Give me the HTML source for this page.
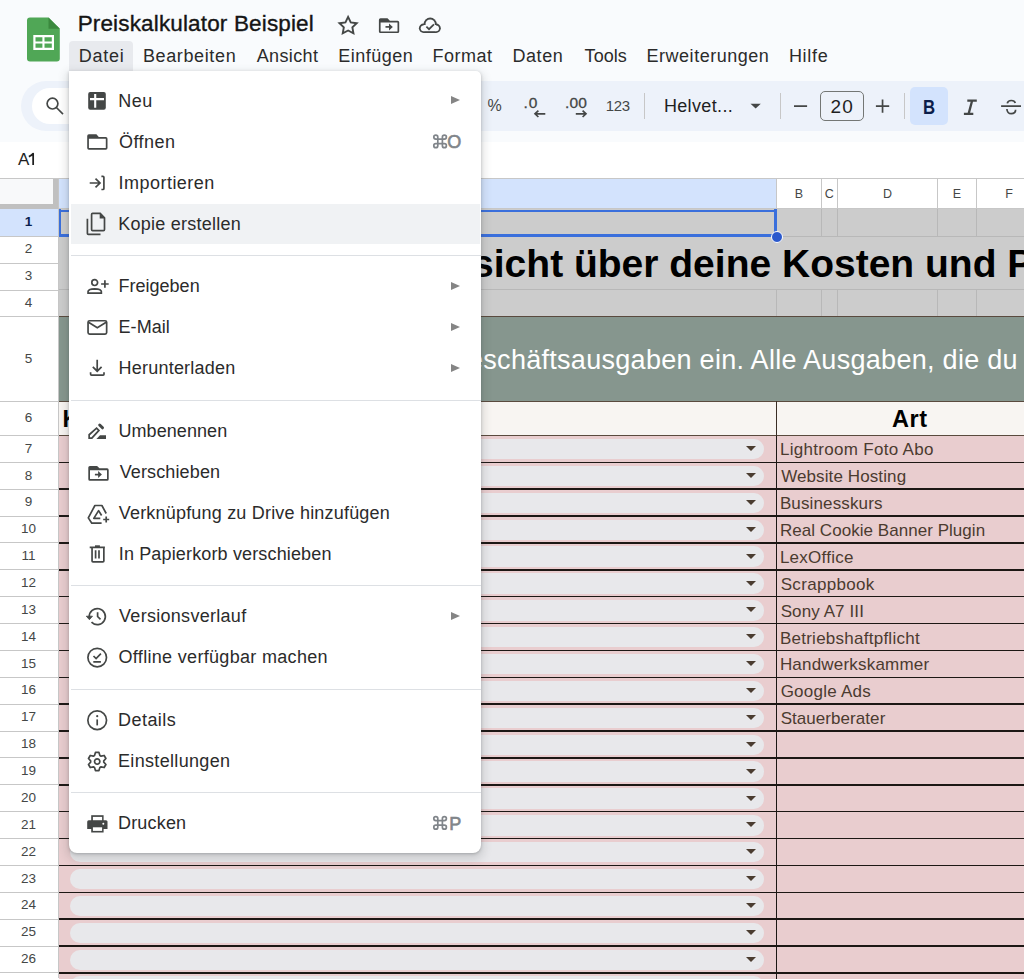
<!DOCTYPE html>
<html><head><meta charset="utf-8"><style>
html,body{margin:0;padding:0;}
body{width:1024px;height:979px;overflow:hidden;position:relative;background:#f9fbfd;font-family:"Liberation Sans",sans-serif;}
.t{position:absolute;line-height:0;white-space:nowrap;}
.r{position:absolute;}
.tr{position:absolute;right:100%;white-space:pre;}
svg{position:absolute;left:0;top:0;}
</style></head><body>
<div class="t " style="left:77.65px;top:23.80px;font-size:22.5px;color:#151515;font-weight:400;letter-spacing:0.154px;-webkit-text-stroke:0.35px #151515">Preiskalkulator Beispiel</div>
<div class="r" style="left:69.20px;top:41.00px;width:63.60px;height:32.00px;background:#e8eaee;border-radius:4px 4px 0 0"></div>
<div class="t " style="left:78.70px;top:55.66px;font-size:18px;color:#2b2b2b;font-weight:400;letter-spacing:0.787px;">Datei</div>
<div class="t " style="left:142.90px;top:55.66px;font-size:18px;color:#2b2b2b;font-weight:400;letter-spacing:0.633px;">Bearbeiten</div>
<div class="t " style="left:256.70px;top:55.66px;font-size:18px;color:#2b2b2b;font-weight:400;letter-spacing:0.375px;">Ansicht</div>
<div class="t " style="left:338.30px;top:55.66px;font-size:18px;color:#2b2b2b;font-weight:400;letter-spacing:0.486px;">Einfügen</div>
<div class="t " style="left:432.50px;top:55.66px;font-size:18px;color:#2b2b2b;font-weight:400;letter-spacing:0.510px;">Format</div>
<div class="t " style="left:512.40px;top:55.66px;font-size:18px;color:#2b2b2b;font-weight:400;letter-spacing:0.588px;">Daten</div>
<div class="t " style="left:584.60px;top:55.66px;font-size:18px;color:#2b2b2b;font-weight:400;letter-spacing:0.062px;">Tools</div>
<div class="t " style="left:646.50px;top:55.66px;font-size:18px;color:#2b2b2b;font-weight:400;letter-spacing:0.525px;">Erweiterungen</div>
<div class="t " style="left:788.90px;top:55.66px;font-size:18px;color:#2b2b2b;font-weight:400;letter-spacing:0.688px;">Hilfe</div>
<div class="r" style="left:20.70px;top:80.70px;width:1100.00px;height:50.70px;background:#edf2fa;border-radius:25.35px"></div>
<div class="r" style="left:31.80px;top:87.90px;width:300.00px;height:36.00px;background:#ffffff;border-radius:18px"></div>
<div class="r" style="left:0.00px;top:141.80px;width:1024.00px;height:36.70px;background:#ffffff;"></div>
<div class="t " style="left:18.10px;top:159.91px;font-size:17px;color:#1f1f1f;font-weight:400;">A</div>
<div class="t " style="left:487.40px;top:106.21px;font-size:16px;color:#444746;font-weight:400;">%</div>
<div class="t " style="left:663.90px;top:105.86px;font-size:18px;color:#1f1f1f;font-weight:400;letter-spacing:0.356px;">Helvet...</div>
<div class="r" style="left:820.40px;top:91.30px;width:43.60px;height:29.60px;background:transparent;border:1.3px solid #747775;border-radius:5px;box-sizing:border-box"></div>
<div class="t " style="left:830.50px;top:106.92px;font-size:19px;color:#1f1f1f;font-weight:400;letter-spacing:1.300px;">20</div>
<div class="r" style="left:910.30px;top:87.00px;width:37.90px;height:37.90px;background:#d3e3fd;border-radius:5px"></div>
<div class="r" style="left:643.50px;top:93.20px;width:1.00px;height:25.50px;background:#c7c7c7;"></div>
<div class="r" style="left:779.70px;top:93.20px;width:1.00px;height:25.50px;background:#c7c7c7;"></div>
<div class="r" style="left:904.10px;top:93.20px;width:1.00px;height:25.50px;background:#c7c7c7;"></div>
<div class="r" style="left:0.00px;top:178.40px;width:1024.00px;height:800.60px;background:#ffffff;"></div>
<div class="r" style="left:58.50px;top:178.90px;width:718.00px;height:30.00px;background:#d3e3fd;"></div>
<div class="r" style="left:0.00px;top:178.20px;width:1024.00px;height:1.00px;background:#c7c7c7;"></div>
<div class="r" style="left:0.00px;top:208.40px;width:1024.00px;height:1.00px;background:#c7c7c7;"></div>
<div class="r" style="left:776.00px;top:178.40px;width:1.00px;height:30.50px;background:#c7c7c7;"></div>
<div class="r" style="left:820.60px;top:178.40px;width:1.00px;height:30.50px;background:#c7c7c7;"></div>
<div class="r" style="left:836.90px;top:178.40px;width:1.00px;height:30.50px;background:#c7c7c7;"></div>
<div class="r" style="left:936.90px;top:178.40px;width:1.00px;height:30.50px;background:#c7c7c7;"></div>
<div class="r" style="left:975.60px;top:178.40px;width:1.00px;height:30.50px;background:#c7c7c7;"></div>
<div class="t" style="left:779px;width:40px;text-align:center;top:194.27px;font-size:12.5px;color:#444746">B</div>
<div class="t" style="left:809.3px;width:40px;text-align:center;top:194.27px;font-size:12.5px;color:#444746">C</div>
<div class="t" style="left:867.4px;width:40px;text-align:center;top:194.27px;font-size:12.5px;color:#444746">D</div>
<div class="t" style="left:936.8px;width:40px;text-align:center;top:194.27px;font-size:12.5px;color:#444746">E</div>
<div class="t" style="left:989px;width:40px;text-align:center;top:194.27px;font-size:12.5px;color:#444746">F</div>
<div class="r" style="left:0.00px;top:178.90px;width:58.50px;height:30.00px;background:#f8f9fa;"></div>
<div class="r" style="left:52.50px;top:178.90px;width:6.00px;height:30.50px;background:#c0c0c0;"></div>
<div class="r" style="left:0.00px;top:203.50px;width:58.50px;height:5.90px;background:#c0c0c0;"></div>
<div class="r" style="left:0.00px;top:209.20px;width:58.40px;height:27.00px;background:#d3e3fd;"></div>
<div class="r" style="left:0.00px;top:235.70px;width:58.40px;height:1.00px;background:#c7c7c7;"></div>
<div class="t" style="left:0;width:57px;text-align:center;top:222.42px;font-size:13.5px;color:#0b1f4f;font-weight:700">1</div>
<div class="r" style="left:0.00px;top:262.70px;width:58.40px;height:1.00px;background:#c7c7c7;"></div>
<div class="t" style="left:0;width:57px;text-align:center;top:249.42px;font-size:13.5px;color:#444746;font-weight:400">2</div>
<div class="r" style="left:0.00px;top:289.70px;width:58.40px;height:1.00px;background:#c7c7c7;"></div>
<div class="t" style="left:0;width:57px;text-align:center;top:276.42px;font-size:13.5px;color:#444746;font-weight:400">3</div>
<div class="r" style="left:0.00px;top:316.00px;width:58.40px;height:1.00px;background:#c7c7c7;"></div>
<div class="t" style="left:0;width:57px;text-align:center;top:303.07px;font-size:13.5px;color:#444746;font-weight:400">4</div>
<div class="r" style="left:0.00px;top:400.60px;width:58.40px;height:1.00px;background:#c7c7c7;"></div>
<div class="t" style="left:0;width:57px;text-align:center;top:358.52px;font-size:13.5px;color:#444746;font-weight:400">5</div>
<div class="r" style="left:0.00px;top:435.00px;width:58.40px;height:1.00px;background:#c7c7c7;"></div>
<div class="t" style="left:0;width:57px;text-align:center;top:418.02px;font-size:13.5px;color:#444746;font-weight:400">6</div>
<div class="r" style="left:0.00px;top:461.87px;width:58.40px;height:1.00px;background:#c7c7c7;"></div>
<div class="t" style="left:0;width:57px;text-align:center;top:448.66px;font-size:13.5px;color:#444746;font-weight:400">7</div>
<div class="r" style="left:0.00px;top:488.74px;width:58.40px;height:1.00px;background:#c7c7c7;"></div>
<div class="t" style="left:0;width:57px;text-align:center;top:475.53px;font-size:13.5px;color:#444746;font-weight:400">8</div>
<div class="r" style="left:0.00px;top:515.61px;width:58.40px;height:1.00px;background:#c7c7c7;"></div>
<div class="t" style="left:0;width:57px;text-align:center;top:502.40px;font-size:13.5px;color:#444746;font-weight:400">9</div>
<div class="r" style="left:0.00px;top:542.48px;width:58.40px;height:1.00px;background:#c7c7c7;"></div>
<div class="t" style="left:0;width:57px;text-align:center;top:529.27px;font-size:13.5px;color:#444746;font-weight:400">10</div>
<div class="r" style="left:0.00px;top:569.35px;width:58.40px;height:1.00px;background:#c7c7c7;"></div>
<div class="t" style="left:0;width:57px;text-align:center;top:556.14px;font-size:13.5px;color:#444746;font-weight:400">11</div>
<div class="r" style="left:0.00px;top:596.22px;width:58.40px;height:1.00px;background:#c7c7c7;"></div>
<div class="t" style="left:0;width:57px;text-align:center;top:583.01px;font-size:13.5px;color:#444746;font-weight:400">12</div>
<div class="r" style="left:0.00px;top:623.09px;width:58.40px;height:1.00px;background:#c7c7c7;"></div>
<div class="t" style="left:0;width:57px;text-align:center;top:609.88px;font-size:13.5px;color:#444746;font-weight:400">13</div>
<div class="r" style="left:0.00px;top:649.96px;width:58.40px;height:1.00px;background:#c7c7c7;"></div>
<div class="t" style="left:0;width:57px;text-align:center;top:636.75px;font-size:13.5px;color:#444746;font-weight:400">14</div>
<div class="r" style="left:0.00px;top:676.83px;width:58.40px;height:1.00px;background:#c7c7c7;"></div>
<div class="t" style="left:0;width:57px;text-align:center;top:663.62px;font-size:13.5px;color:#444746;font-weight:400">15</div>
<div class="r" style="left:0.00px;top:703.70px;width:58.40px;height:1.00px;background:#c7c7c7;"></div>
<div class="t" style="left:0;width:57px;text-align:center;top:690.49px;font-size:13.5px;color:#444746;font-weight:400">16</div>
<div class="r" style="left:0.00px;top:730.57px;width:58.40px;height:1.00px;background:#c7c7c7;"></div>
<div class="t" style="left:0;width:57px;text-align:center;top:717.36px;font-size:13.5px;color:#444746;font-weight:400">17</div>
<div class="r" style="left:0.00px;top:757.44px;width:58.40px;height:1.00px;background:#c7c7c7;"></div>
<div class="t" style="left:0;width:57px;text-align:center;top:744.23px;font-size:13.5px;color:#444746;font-weight:400">18</div>
<div class="r" style="left:0.00px;top:784.31px;width:58.40px;height:1.00px;background:#c7c7c7;"></div>
<div class="t" style="left:0;width:57px;text-align:center;top:771.10px;font-size:13.5px;color:#444746;font-weight:400">19</div>
<div class="r" style="left:0.00px;top:811.18px;width:58.40px;height:1.00px;background:#c7c7c7;"></div>
<div class="t" style="left:0;width:57px;text-align:center;top:797.97px;font-size:13.5px;color:#444746;font-weight:400">20</div>
<div class="r" style="left:0.00px;top:838.05px;width:58.40px;height:1.00px;background:#c7c7c7;"></div>
<div class="t" style="left:0;width:57px;text-align:center;top:824.84px;font-size:13.5px;color:#444746;font-weight:400">21</div>
<div class="r" style="left:0.00px;top:864.92px;width:58.40px;height:1.00px;background:#c7c7c7;"></div>
<div class="t" style="left:0;width:57px;text-align:center;top:851.71px;font-size:13.5px;color:#444746;font-weight:400">22</div>
<div class="r" style="left:0.00px;top:891.79px;width:58.40px;height:1.00px;background:#c7c7c7;"></div>
<div class="t" style="left:0;width:57px;text-align:center;top:878.58px;font-size:13.5px;color:#444746;font-weight:400">23</div>
<div class="r" style="left:0.00px;top:918.66px;width:58.40px;height:1.00px;background:#c7c7c7;"></div>
<div class="t" style="left:0;width:57px;text-align:center;top:905.45px;font-size:13.5px;color:#444746;font-weight:400">24</div>
<div class="r" style="left:0.00px;top:945.53px;width:58.40px;height:1.00px;background:#c7c7c7;"></div>
<div class="t" style="left:0;width:57px;text-align:center;top:932.32px;font-size:13.5px;color:#444746;font-weight:400">25</div>
<div class="r" style="left:0.00px;top:972.40px;width:58.40px;height:1.00px;background:#c7c7c7;"></div>
<div class="t" style="left:0;width:57px;text-align:center;top:959.19px;font-size:13.5px;color:#444746;font-weight:400">26</div>
<div class="r" style="left:0.00px;top:999.27px;width:58.40px;height:1.00px;background:#c7c7c7;"></div>
<div class="t" style="left:0;width:57px;text-align:center;top:986.06px;font-size:13.5px;color:#444746;font-weight:400">27</div>
<div class="r" style="left:0.00px;top:1026.14px;width:58.40px;height:1.00px;background:#c7c7c7;"></div>
<div class="r" style="left:58.20px;top:178.40px;width:1.00px;height:800.00px;background:#c7c7c7;"></div>
<div class="r" style="left:59.00px;top:209.20px;width:965.00px;height:107.30px;background:#cccccc;"></div>
<div class="r" style="left:776.00px;top:209.20px;width:1.00px;height:27.00px;background:#b8b8b8;"></div>
<div class="r" style="left:776.00px;top:290.20px;width:1.00px;height:26.30px;background:#b8b8b8;"></div>
<div class="r" style="left:820.60px;top:209.20px;width:1.00px;height:27.00px;background:#b8b8b8;"></div>
<div class="r" style="left:820.60px;top:290.20px;width:1.00px;height:26.30px;background:#b8b8b8;"></div>
<div class="r" style="left:836.90px;top:209.20px;width:1.00px;height:27.00px;background:#b8b8b8;"></div>
<div class="r" style="left:836.90px;top:290.20px;width:1.00px;height:26.30px;background:#b8b8b8;"></div>
<div class="r" style="left:936.90px;top:209.20px;width:1.00px;height:27.00px;background:#b8b8b8;"></div>
<div class="r" style="left:936.90px;top:290.20px;width:1.00px;height:26.30px;background:#b8b8b8;"></div>
<div class="r" style="left:975.60px;top:209.20px;width:1.00px;height:27.00px;background:#b8b8b8;"></div>
<div class="r" style="left:975.60px;top:290.20px;width:1.00px;height:26.30px;background:#b8b8b8;"></div>
<div class="r" style="left:59.00px;top:235.70px;width:965.00px;height:1.00px;background:#b8b8b8;"></div>
<div class="r" style="left:59.00px;top:289.40px;width:965.00px;height:1.00px;background:#b8b8b8;"></div>
<div class="t " style="left:782.00px;top:264.19px;font-size:39px;color:#000;font-weight:700;"><span class="tr">Übersicht über deine </span>Kosten und Preise</div>
<div class="r" style="left:59.00px;top:316.00px;width:965.00px;height:85.10px;background:#86968e;"></div>
<div class="r" style="left:59.00px;top:315.60px;width:965.00px;height:1.20px;background:#5a4a3e;"></div>
<div class="t " style="left:699.60px;top:359.94px;font-size:27px;color:#ffffff;font-weight:400;letter-spacing:0.29px"><span class="tr">Geschäftsausgaben </span>ein. Alle Ausgaben, die du</div>
<div class="r" style="left:59.00px;top:401.10px;width:965.00px;height:34.50px;background:#f8f5f2;"></div>
<div class="r" style="left:59.00px;top:400.60px;width:965.00px;height:1.20px;background:#5a4a3e;"></div>
<div class="r" style="left:59.00px;top:435.00px;width:965.00px;height:1.20px;background:#5a4a3e;"></div>
<div class="r" style="left:775.80px;top:401.10px;width:1.40px;height:34.50px;background:#3a2e26;"></div>
<div class="t " style="left:62.50px;top:418.56px;font-size:23.5px;color:#000;font-weight:700;">Kosten</div>
<div class="t " style="left:892.05px;top:418.86px;font-size:23.5px;color:#000;font-weight:700;letter-spacing:0.600px;">Art</div>
<div class="r" style="left:59.00px;top:436.20px;width:965.00px;height:543.00px;background:#e9cdcf;"></div>
<div class="r" style="left:59.00px;top:461.62px;width:965.00px;height:1.50px;background:#1c1714;"></div>
<div class="r" style="left:70.20px;top:439.00px;width:693.80px;height:20.40px;background:#e8e8eb;border-radius:10.2px"></div>
<div class="r" style="left:745.6px;top:446.20px;width:0;height:0;border-left:5px solid transparent;border-right:5px solid transparent;border-top:5.3px solid #4a3c30"></div>
<div class="t " style="left:779.90px;top:450.41px;font-size:17px;color:#4b3b30;font-weight:400;letter-spacing:0.303px;">Lightroom Foto Abo</div>
<div class="r" style="left:59.00px;top:488.49px;width:965.00px;height:1.50px;background:#1c1714;"></div>
<div class="r" style="left:70.20px;top:465.87px;width:693.80px;height:20.40px;background:#e8e8eb;border-radius:10.2px"></div>
<div class="r" style="left:745.6px;top:473.07px;width:0;height:0;border-left:5px solid transparent;border-right:5px solid transparent;border-top:5.3px solid #4a3c30"></div>
<div class="t " style="left:781.15px;top:477.28px;font-size:17px;color:#4b3b30;font-weight:400;letter-spacing:0.107px;">Website Hosting</div>
<div class="r" style="left:59.00px;top:515.36px;width:965.00px;height:1.50px;background:#1c1714;"></div>
<div class="r" style="left:70.20px;top:492.74px;width:693.80px;height:20.40px;background:#e8e8eb;border-radius:10.2px"></div>
<div class="r" style="left:745.6px;top:499.94px;width:0;height:0;border-left:5px solid transparent;border-right:5px solid transparent;border-top:5.3px solid #4a3c30"></div>
<div class="t " style="left:779.90px;top:504.15px;font-size:17px;color:#4b3b30;font-weight:400;letter-spacing:0.136px;">Businesskurs</div>
<div class="r" style="left:59.00px;top:542.23px;width:965.00px;height:1.50px;background:#1c1714;"></div>
<div class="r" style="left:70.20px;top:519.61px;width:693.80px;height:20.40px;background:#e8e8eb;border-radius:10.2px"></div>
<div class="r" style="left:745.6px;top:526.81px;width:0;height:0;border-left:5px solid transparent;border-right:5px solid transparent;border-top:5.3px solid #4a3c30"></div>
<div class="t " style="left:779.90px;top:531.02px;font-size:17px;color:#4b3b30;font-weight:400;letter-spacing:0.046px;">Real Cookie Banner Plugin</div>
<div class="r" style="left:59.00px;top:569.10px;width:965.00px;height:1.50px;background:#1c1714;"></div>
<div class="r" style="left:70.20px;top:546.48px;width:693.80px;height:20.40px;background:#e8e8eb;border-radius:10.2px"></div>
<div class="r" style="left:745.6px;top:553.68px;width:0;height:0;border-left:5px solid transparent;border-right:5px solid transparent;border-top:5.3px solid #4a3c30"></div>
<div class="t " style="left:779.90px;top:557.89px;font-size:17px;color:#4b3b30;font-weight:400;letter-spacing:0.256px;">LexOffice</div>
<div class="r" style="left:59.00px;top:595.97px;width:965.00px;height:1.50px;background:#1c1714;"></div>
<div class="r" style="left:70.20px;top:573.35px;width:693.80px;height:20.40px;background:#e8e8eb;border-radius:10.2px"></div>
<div class="r" style="left:745.6px;top:580.55px;width:0;height:0;border-left:5px solid transparent;border-right:5px solid transparent;border-top:5.3px solid #4a3c30"></div>
<div class="t " style="left:780.65px;top:584.76px;font-size:17px;color:#4b3b30;font-weight:400;letter-spacing:0.333px;">Scrappbook</div>
<div class="r" style="left:59.00px;top:622.84px;width:965.00px;height:1.50px;background:#1c1714;"></div>
<div class="r" style="left:70.20px;top:600.22px;width:693.80px;height:20.40px;background:#e8e8eb;border-radius:10.2px"></div>
<div class="r" style="left:745.6px;top:607.42px;width:0;height:0;border-left:5px solid transparent;border-right:5px solid transparent;border-top:5.3px solid #4a3c30"></div>
<div class="t " style="left:780.65px;top:611.63px;font-size:17px;color:#4b3b30;font-weight:400;letter-spacing:0.100px;">Sony A7 III</div>
<div class="r" style="left:59.00px;top:649.71px;width:965.00px;height:1.50px;background:#1c1714;"></div>
<div class="r" style="left:70.20px;top:627.09px;width:693.80px;height:20.40px;background:#e8e8eb;border-radius:10.2px"></div>
<div class="r" style="left:745.6px;top:634.29px;width:0;height:0;border-left:5px solid transparent;border-right:5px solid transparent;border-top:5.3px solid #4a3c30"></div>
<div class="t " style="left:779.90px;top:638.50px;font-size:17px;color:#4b3b30;font-weight:400;letter-spacing:0.256px;">Betriebshaftpflicht</div>
<div class="r" style="left:59.00px;top:676.58px;width:965.00px;height:1.50px;background:#1c1714;"></div>
<div class="r" style="left:70.20px;top:653.96px;width:693.80px;height:20.40px;background:#e8e8eb;border-radius:10.2px"></div>
<div class="r" style="left:745.6px;top:661.16px;width:0;height:0;border-left:5px solid transparent;border-right:5px solid transparent;border-top:5.3px solid #4a3c30"></div>
<div class="t " style="left:779.90px;top:665.37px;font-size:17px;color:#4b3b30;font-weight:400;letter-spacing:0.204px;">Handwerkskammer</div>
<div class="r" style="left:59.00px;top:703.45px;width:965.00px;height:1.50px;background:#1c1714;"></div>
<div class="r" style="left:70.20px;top:680.83px;width:693.80px;height:20.40px;background:#e8e8eb;border-radius:10.2px"></div>
<div class="r" style="left:745.6px;top:688.03px;width:0;height:0;border-left:5px solid transparent;border-right:5px solid transparent;border-top:5.3px solid #4a3c30"></div>
<div class="t " style="left:780.65px;top:692.24px;font-size:17px;color:#4b3b30;font-weight:400;letter-spacing:0.244px;">Google Ads</div>
<div class="r" style="left:59.00px;top:730.32px;width:965.00px;height:1.50px;background:#1c1714;"></div>
<div class="r" style="left:70.20px;top:707.70px;width:693.80px;height:20.40px;background:#e8e8eb;border-radius:10.2px"></div>
<div class="r" style="left:745.6px;top:714.90px;width:0;height:0;border-left:5px solid transparent;border-right:5px solid transparent;border-top:5.3px solid #4a3c30"></div>
<div class="t " style="left:780.65px;top:719.11px;font-size:17px;color:#4b3b30;font-weight:400;letter-spacing:0.058px;">Stauerberater</div>
<div class="r" style="left:59.00px;top:757.19px;width:965.00px;height:1.50px;background:#1c1714;"></div>
<div class="r" style="left:70.20px;top:734.57px;width:693.80px;height:20.40px;background:#e8e8eb;border-radius:10.2px"></div>
<div class="r" style="left:745.6px;top:741.77px;width:0;height:0;border-left:5px solid transparent;border-right:5px solid transparent;border-top:5.3px solid #4a3c30"></div>
<div class="r" style="left:59.00px;top:784.06px;width:965.00px;height:1.50px;background:#1c1714;"></div>
<div class="r" style="left:70.20px;top:761.44px;width:693.80px;height:20.40px;background:#e8e8eb;border-radius:10.2px"></div>
<div class="r" style="left:745.6px;top:768.64px;width:0;height:0;border-left:5px solid transparent;border-right:5px solid transparent;border-top:5.3px solid #4a3c30"></div>
<div class="r" style="left:59.00px;top:810.93px;width:965.00px;height:1.50px;background:#1c1714;"></div>
<div class="r" style="left:70.20px;top:788.31px;width:693.80px;height:20.40px;background:#e8e8eb;border-radius:10.2px"></div>
<div class="r" style="left:745.6px;top:795.51px;width:0;height:0;border-left:5px solid transparent;border-right:5px solid transparent;border-top:5.3px solid #4a3c30"></div>
<div class="r" style="left:59.00px;top:837.80px;width:965.00px;height:1.50px;background:#1c1714;"></div>
<div class="r" style="left:70.20px;top:815.18px;width:693.80px;height:20.40px;background:#e8e8eb;border-radius:10.2px"></div>
<div class="r" style="left:745.6px;top:822.38px;width:0;height:0;border-left:5px solid transparent;border-right:5px solid transparent;border-top:5.3px solid #4a3c30"></div>
<div class="r" style="left:59.00px;top:864.67px;width:965.00px;height:1.50px;background:#1c1714;"></div>
<div class="r" style="left:70.20px;top:842.05px;width:693.80px;height:20.40px;background:#e8e8eb;border-radius:10.2px"></div>
<div class="r" style="left:745.6px;top:849.25px;width:0;height:0;border-left:5px solid transparent;border-right:5px solid transparent;border-top:5.3px solid #4a3c30"></div>
<div class="r" style="left:59.00px;top:891.54px;width:965.00px;height:1.50px;background:#1c1714;"></div>
<div class="r" style="left:70.20px;top:868.92px;width:693.80px;height:20.40px;background:#e8e8eb;border-radius:10.2px"></div>
<div class="r" style="left:745.6px;top:876.12px;width:0;height:0;border-left:5px solid transparent;border-right:5px solid transparent;border-top:5.3px solid #4a3c30"></div>
<div class="r" style="left:59.00px;top:918.41px;width:965.00px;height:1.50px;background:#1c1714;"></div>
<div class="r" style="left:70.20px;top:895.79px;width:693.80px;height:20.40px;background:#e8e8eb;border-radius:10.2px"></div>
<div class="r" style="left:745.6px;top:902.99px;width:0;height:0;border-left:5px solid transparent;border-right:5px solid transparent;border-top:5.3px solid #4a3c30"></div>
<div class="r" style="left:59.00px;top:945.28px;width:965.00px;height:1.50px;background:#1c1714;"></div>
<div class="r" style="left:70.20px;top:922.66px;width:693.80px;height:20.40px;background:#e8e8eb;border-radius:10.2px"></div>
<div class="r" style="left:745.6px;top:929.86px;width:0;height:0;border-left:5px solid transparent;border-right:5px solid transparent;border-top:5.3px solid #4a3c30"></div>
<div class="r" style="left:59.00px;top:972.15px;width:965.00px;height:1.50px;background:#1c1714;"></div>
<div class="r" style="left:70.20px;top:949.53px;width:693.80px;height:20.40px;background:#e8e8eb;border-radius:10.2px"></div>
<div class="r" style="left:745.6px;top:956.73px;width:0;height:0;border-left:5px solid transparent;border-right:5px solid transparent;border-top:5.3px solid #4a3c30"></div>
<div class="r" style="left:59.00px;top:999.02px;width:965.00px;height:1.50px;background:#1c1714;"></div>
<div class="r" style="left:70.20px;top:976.40px;width:693.80px;height:20.40px;background:#e8e8eb;border-radius:10.2px"></div>
<div class="r" style="left:745.6px;top:983.60px;width:0;height:0;border-left:5px solid transparent;border-right:5px solid transparent;border-top:5.3px solid #4a3c30"></div>
<div class="r" style="left:775.60px;top:436.00px;width:1.50px;height:543.00px;background:#1c1714;"></div>
<div class="r" style="left:58.50px;top:209.80px;width:718.50px;height:1.80px;background:#3a6fdc;"></div>
<div class="r" style="left:58.50px;top:234.10px;width:718.50px;height:2.80px;background:#3a6fdc;"></div>
<div class="r" style="left:58.50px;top:209.40px;width:2.00px;height:27.50px;background:#3a6fdc;"></div>
<div class="r" style="left:774.10px;top:209.40px;width:2.90px;height:27.50px;background:#3a6fdc;"></div>
<div class="r" style="left:770.80px;top:230.80px;width:12.20px;height:12.20px;background:#2a58cc;border-radius:50%;border:1.1px solid #fff;box-sizing:border-box"></div>
<div class="r" style="left:69.30px;top:71.20px;width:411.70px;height:781.90px;background:#ffffff;border-radius:0 5px 8px 8px;box-shadow:0 4px 8px 3px rgba(60,64,67,.15),0 1px 3px rgba(60,64,67,.3)"></div>
<div class="r" style="left:71.00px;top:203.60px;width:409.00px;height:40.40px;background:#f0f2f4;"></div>
<div class="r" style="left:71.00px;top:254.90px;width:410.00px;height:1.00px;background:#dde0e4;"></div>
<div class="r" style="left:71.00px;top:399.50px;width:410.00px;height:1.00px;background:#dde0e4;"></div>
<div class="r" style="left:71.00px;top:585.00px;width:410.00px;height:1.00px;background:#dde0e4;"></div>
<div class="r" style="left:71.00px;top:688.50px;width:410.00px;height:1.00px;background:#dde0e4;"></div>
<div class="r" style="left:71.00px;top:792.10px;width:410.00px;height:1.00px;background:#dde0e4;"></div>
<div class="t " style="left:118.30px;top:100.86px;font-size:18px;color:#2b2b2b;font-weight:400;letter-spacing:0.425px;">Neu</div>
<div class="r" style="left:451px;top:96.10px;width:0;height:0;border-top:4.5px solid transparent;border-bottom:4.5px solid transparent;border-left:9px solid #858585"></div>
<div class="t " style="left:119.05px;top:141.86px;font-size:18px;color:#2b2b2b;font-weight:400;letter-spacing:0.430px;">Öffnen</div>
<div class="t" style="right:562.8px;top:142.46px;font-size:18px;color:#80858a;-webkit-text-stroke:0.6px #80858a">O</div>
<div class="t " style="left:118.55px;top:182.86px;font-size:18px;color:#2b2b2b;font-weight:400;letter-spacing:0.470px;">Importieren</div>
<div class="t " style="left:118.30px;top:223.86px;font-size:18px;color:#2b2b2b;font-weight:400;letter-spacing:0.236px;">Kopie erstellen</div>
<div class="t " style="left:118.50px;top:286.36px;font-size:18px;color:#2b2b2b;font-weight:400;letter-spacing:0.012px;">Freigeben</div>
<div class="r" style="left:451px;top:281.60px;width:0;height:0;border-top:4.5px solid transparent;border-bottom:4.5px solid transparent;border-left:9px solid #858585"></div>
<div class="t " style="left:118.50px;top:327.36px;font-size:18px;color:#2b2b2b;font-weight:400;letter-spacing:0.070px;">E-Mail</div>
<div class="r" style="left:451px;top:322.60px;width:0;height:0;border-top:4.5px solid transparent;border-bottom:4.5px solid transparent;border-left:9px solid #858585"></div>
<div class="t " style="left:118.50px;top:368.36px;font-size:18px;color:#2b2b2b;font-weight:400;letter-spacing:0.225px;">Herunterladen</div>
<div class="r" style="left:451px;top:363.60px;width:0;height:0;border-top:4.5px solid transparent;border-bottom:4.5px solid transparent;border-left:9px solid #858585"></div>
<div class="t " style="left:118.40px;top:430.86px;font-size:18px;color:#2b2b2b;font-weight:400;letter-spacing:0.078px;">Umbenennen</div>
<div class="t " style="left:119.65px;top:471.86px;font-size:18px;color:#2b2b2b;font-weight:400;letter-spacing:0.135px;">Verschieben</div>
<div class="t " style="left:118.75px;top:512.86px;font-size:18px;color:#2b2b2b;font-weight:400;letter-spacing:0.195px;">Verknüpfung zu Drive hinzufügen</div>
<div class="t " style="left:118.75px;top:553.86px;font-size:18px;color:#2b2b2b;font-weight:400;letter-spacing:0.148px;">In Papierkorb verschieben</div>
<div class="t " style="left:119.05px;top:616.36px;font-size:18px;color:#2b2b2b;font-weight:400;letter-spacing:0.289px;">Versionsverlauf</div>
<div class="r" style="left:451px;top:611.60px;width:0;height:0;border-top:4.5px solid transparent;border-bottom:4.5px solid transparent;border-left:9px solid #858585"></div>
<div class="t " style="left:118.55px;top:657.36px;font-size:18px;color:#2b2b2b;font-weight:400;letter-spacing:0.315px;">Offline verfügbar machen</div>
<div class="t " style="left:118.00px;top:719.86px;font-size:18px;color:#2b2b2b;font-weight:400;letter-spacing:0.458px;">Details</div>
<div class="t " style="left:118.00px;top:760.86px;font-size:18px;color:#2b2b2b;font-weight:400;letter-spacing:0.325px;">Einstellungen</div>
<div class="t " style="left:118.00px;top:823.36px;font-size:18px;color:#2b2b2b;font-weight:400;letter-spacing:0.175px;">Drucken</div>
<div class="t" style="right:562.8px;top:823.96px;font-size:18px;color:#80858a;-webkit-text-stroke:0.6px #80858a">P</div>
<div class="t " style="left:523.50px;top:102.93px;font-size:15.5px;color:#444746;font-weight:400;letter-spacing:0.950px;-webkit-text-stroke:0.3px #444746">.0</div>
<div class="t " style="left:564.90px;top:102.93px;font-size:15.5px;color:#444746;font-weight:400;letter-spacing:0.250px;-webkit-text-stroke:0.3px #444746">.00</div>
<div class="t " style="left:605.75px;top:106.20px;font-size:15px;color:#444746;font-weight:400;letter-spacing:-0.400px;">123</div>
<div class="t" style="left:923.3px;top:106.94px;font-size:19.5px;color:#0b1d4a;font-weight:700;transform:scaleX(0.86);transform-origin:left">B</div>
<svg width="1024" height="979" viewBox="0 0 1024 979"><g transform="translate(97,100.89999999999999)"><rect x="-8.8" y="-8.85" width="17.6" height="17.7" rx="2" fill="#444746"/><path d="M-1.8,-6.9V6.8M-7,-1.8H7" stroke="#fff" stroke-width="2.1"/></g><g transform="translate(97,141.9)"><path fill-rule="evenodd" fill="#444746" d="M-9.8,-6 Q-9.8,-7.7 -8.1,-7.7 H-0.6 L1.8,-4.8 H8.8 Q10.5,-4.8 10.5,-3.1 V6.1 Q10.5,7.8 8.8,7.8 H-8.1 Q-9.8,7.8 -9.8,6.1 Z M-8.1,-3.1 H8.8 V6.2 H-8.1 Z"/></g><g transform="translate(97,182.9)"><path fill="none" stroke="#444746" stroke-width="1.7" d="M-7.3,0.1 H3.2 M-1.5,-4.3 L3,0.1 L-1.5,4.5 M4.4,-6.6 H5.9 Q6.9,-6.6 6.9,-5.6 V5.6 Q6.9,6.6 5.9,6.6 H4.4"/></g><g transform="translate(96.5,223.9)"><path fill="none" stroke="#444746" stroke-width="1.7" d="M-9.1,-5.1 V9.5 Q-9.1,10.4 -8.2,10.4 H4 M-3.9,-10.5 H3.7 L8,-6.1 V5.6 Q8,6.7 6.9,6.7 H-3.9 Q-4.9,6.7 -4.9,5.6 V-9.5 Q-4.9,-10.5 -3.9,-10.5 Z"/><path d="M3.2,-11 L8.7,-5.4 H3.2 Z" fill="#444746"/></g><g transform="translate(97,286.40000000000003)"><circle cx="-2.3" cy="-3.8" r="2.9" fill="none" stroke="#444746" stroke-width="1.7"/><path fill="none" stroke="#444746" stroke-width="1.7" d="M-8.95,6.65 V5.2 Q-8.95,2.6 -2.3,2.4 Q4.35,2.6 4.35,5.2 V6.65 Z"/><path fill="none" stroke="#444746" stroke-width="1.7" d="M7.9,-6.2 V1.4 M4.1,-2.4 H11.7"/></g><g transform="translate(97,327.40000000000003)"><rect x="-8.95" y="-6.65" width="18.6" height="13.3" rx="1.6" fill="none" stroke="#444746" stroke-width="1.7"/><path fill="none" stroke="#444746" stroke-width="1.7" d="M-8.5,-5.2 L0.3,0.3 L9.2,-5.2"/></g><g transform="translate(97,368.40000000000003)"><path fill="none" stroke="#444746" stroke-width="1.7" d="M0.2,-8.7 V2.5 M-4.2,-1.6 L0.2,2.8 L4.6,-1.6 M-6.4,3.8 V5.8 Q-6.4,6.7 -5.5,6.7 H6.1 Q7,6.7 7,5.8 V3.8"/></g><g transform="translate(97,430.90000000000003)"><path fill="none" stroke="#444746" stroke-width="1.7" stroke-linejoin="miter" d="M-7.85,7.15 V3.85 L-0.4,-2.8 L1.9,-0.5 L-5.15,7.15 Z"/><path d="M2.7,-5.9 L5.5,-3.1" stroke="#444746" stroke-width="3" stroke-linecap="round"/><path d="M-0.6,8 L3,4.3 H9 V8 Z" fill="#444746"/></g><g transform="translate(97,471.90000000000003)"><path fill-rule="evenodd" fill="#444746" d="M-8.7,-4.4 Q-8.7,-6 -7.1,-6 H0.1 L2.5,-3.6 H10.1 Q11.7,-3.6 11.7,-2 V7.3 Q11.7,8.9 10.1,8.9 H-7.1 Q-8.7,8.9 -8.7,7.3 Z M-7,-1.7 H10 V7.2 H-7 Z"/><path d="M-2.1,2.7 H2.5" stroke="#444746" stroke-width="1.7"/><path d="M1.1,-0.8 L4.9,2.7 L1.1,6.2 Z" fill="#444746"/></g><g transform="translate(97,512.9)"><path fill="none" stroke="#444746" stroke-width="1.7" stroke-linejoin="round" d="M9.2,0.6 L4.9,-7.4 H-2.1 L-8.7,5 L-5.2,10.3 H4.6"/><path fill="none" stroke="#444746" stroke-width="1.7" stroke-linejoin="round" d="M4.6,2.6 L1.6,-2.3 L-3.2,5.5 H3.3"/><path fill="none" stroke="#444746" stroke-width="1.7" d="M9.2,3.6 V9.6 M6.2,6.6 H12.2"/></g><g transform="translate(97,553.9)"><path fill="none" stroke="#444746" stroke-width="1.7" d="M-7.3,-6.6 H7.9 M-4.95,-6.6 V7.1 Q-4.95,8.05 -4,8.05 H5.9 Q6.85,8.05 6.85,7.1 V-6.6 M-1.4,-3.6 V4.7 M2,-3.6 V4.7"/><rect x="-2" y="-8.6" width="4.9" height="2" fill="#444746"/></g><g transform="translate(97,616.4)"><path fill="none" stroke="#444746" stroke-width="1.7" d="M-5.5,5.8 A8.05,8.05 0 1 0 -7.75,0.6"/><path fill="#444746" stroke="#444746" stroke-width="0.8" stroke-linejoin="round" d="M-10.7,-0.2 L-7.6,3.3 L-4.5,-0.2 Z"/><path fill="none" stroke="#444746" stroke-width="1.7" d="M0.6,-4.1 V0.1 L3.5,2.9"/></g><g transform="translate(97,657.4)"><circle cx="0.2" cy="0.2" r="9.3" fill="none" stroke="#444746" stroke-width="1.7"/><path fill="none" stroke="#444746" stroke-width="1.7" d="M-3.5,-1.4 L-0.9,1.2 L3.9,-3.7 M-3.7,4.5 H3.9"/></g><g transform="translate(97,719.9)"><circle cx="0.2" cy="0.4" r="9.35" fill="none" stroke="#444746" stroke-width="1.7"/><circle cx="0.2" cy="-3.7" r="1.1" fill="#444746"/><path fill="none" stroke="#444746" stroke-width="1.7" stroke-width="1.8" d="M0.2,-0.5 V5.5"/></g><g transform="translate(97.2,761.5)"><polygon points="-2.68,-6.03 -1.76,-9.03 1.76,-9.03 2.68,-6.03 3.88,-5.34 6.94,-6.04 8.70,-3.00 6.56,-0.69 6.56,0.69 8.70,3.00 6.94,6.04 3.88,5.34 2.68,6.03 1.76,9.03 -1.76,9.03 -2.68,6.03 -3.88,5.34 -6.94,6.04 -8.70,3.00 -6.56,0.69 -6.56,-0.69 -8.70,-3.00 -6.94,-6.04 -3.88,-5.34" fill="none" stroke="#444746" stroke-width="1.7" stroke-linejoin="round"/><circle r="2.65" fill="none" stroke="#444746" stroke-width="1.7"/></g><g transform="translate(97,823.4)"><rect x="-5.8" y="-8.2" width="12.4" height="6" fill="#444746"/><rect x="-4.1" y="-6.5" width="9.2" height="4" fill="#fff"/><path d="M-9.8,-1.6 Q-9.8,-3.1 -8.3,-3.1 H9 Q10.5,-3.1 10.5,-1.6 V5.5 H-9.8 Z" fill="#444746"/><rect x="-5.8" y="2.7" width="12.4" height="6.4" fill="#444746"/><rect x="-4.1" y="3.9" width="9.2" height="3.6" fill="#fff"/><circle cx="6.3" cy="0.4" r="1" fill="#fff"/></g><path transform="translate(433.2,134.50)" fill="none" stroke="#80858a" stroke-width="1.7" d="M4.6,4.6 V2.6 A2,2 0 1 0 2.6,4.6 H11.2 A2,2 0 1 0 9.2,2.6 V11.2 A2,2 0 1 0 11.2,9.2 H2.6 A2,2 0 1 0 4.6,11.2 Z"/><path transform="translate(433.2,816.00)" fill="none" stroke="#80858a" stroke-width="1.7" d="M4.6,4.6 V2.6 A2,2 0 1 0 2.6,4.6 H11.2 A2,2 0 1 0 9.2,2.6 V11.2 A2,2 0 1 0 11.2,9.2 H2.6 A2,2 0 1 0 4.6,11.2 Z"/><path d="M33.15,165.1 V153.6 Q31.7,155.8 28.8,156.6" fill="none" stroke="#1f1f1f" stroke-width="1.75" stroke-linejoin="round"/><circle cx="52.5" cy="103.6" r="5.4" fill="none" stroke="#444746" stroke-width="1.7"/><path fill="none" stroke="#444746" stroke-width="1.7" stroke-width="1.9" d="M56.4,107.5 L63,114.1"/><path d="M30,17.5 H48.5 L59.8,28.8 V58.6 Q59.8,61.6 56.8,61.6 H30 Q27,61.6 27,58.6 V20.5 Q27,17.5 30,17.5 Z" fill="#50a756"/><path d="M48.5,17.5 L59.8,28.8 H48.5 Z" fill="#3b893e"/><path fill-rule="evenodd" fill="#fff" d="M33.3,35 H54 V50 H33.3 Z M35.5,37.2 H42.4 V41.5 H35.5 Z M44.5,37.2 H51.8 V41.5 H44.5 Z M35.5,43.6 H42.4 V47.8 H35.5 Z M44.5,43.6 H51.8 V47.8 H44.5 Z"/><polygon points="348.10,16.90 350.75,22.36 356.75,23.19 352.38,27.39 353.45,33.36 348.10,30.50 342.75,33.36 343.82,27.39 339.45,23.19 345.45,22.36" fill="none" stroke="#444746" stroke-width="1.9" stroke-linejoin="miter"/><g transform="translate(389,25.7)"><path fill-rule="evenodd" fill="#444746" d="M-10.1,-5.8 Q-10.1,-7.4 -8.5,-7.4 H-1.5 L0.9,-5 H8.6 Q10.2,-5 10.2,-3.4 V5.8 Q10.2,7.4 8.6,7.4 H-8.5 Q-10.1,7.4 -10.1,5.8 Z M-8.4,-3.2 H8.5 V5.7 H-8.4 Z"/><path d="M-3.5,1.2 H1.5" stroke="#444746" stroke-width="1.7"/><path d="M0,-2.3 L3.8,1.2 L0,4.7 Z" fill="#444746"/></g><g fill="#444746"><circle cx="423.6" cy="28.3" r="4.7"/><circle cx="430.2" cy="24.1" r="6.5"/><circle cx="436.1" cy="28.3" r="4.7"/><rect x="423.6" y="28.3" width="12.5" height="4.7"/></g><g fill="#f9fbfd"><circle cx="423.6" cy="28.3" r="2.9"/><circle cx="430.2" cy="24.1" r="4.7"/><circle cx="436.1" cy="28.3" r="2.9"/><rect x="423.6" y="25" width="12.5" height="6.2"/></g><path fill="none" stroke="#444746" stroke-width="1.7" d="M426.4,26.7 L429,29.2 L433.9,24.3"/><path fill="none" stroke="#444746" stroke-width="1.7" d="M535,113.8 H545.3 M538.4,110.6 L535,113.8 L538.4,117"/><path fill="none" stroke="#444746" stroke-width="1.7" d="M575.8,113.8 H586 M582.6,110.6 L586,113.8 L582.6,117"/><path d="M750.5,103.7 H760.8 L755.65,108.5 Z" fill="#444746"/><path fill="none" stroke="#444746" stroke-width="1.7" d="M794,106.2 H807.1 M875.9,106.2 H889.2 M882.55,99.6 V112.8"/><path stroke="#444746" stroke-width="2.3" fill="none" d="M967.3,100.7 H976.8 M972.1,100.7 L968.6,113.9 M963.9,113.9 H973.3"/><path fill="none" stroke="#444746" stroke-width="1.7" d="M1001.1,106.2 H1021 M1007.3,103.3 Q1007.8,100.5 1011.3,100.5 Q1014.6,100.5 1015.3,103 M1006.9,109 Q1007.2,113.7 1011.3,113.7 Q1015.6,113.7 1015.6,109.8"/></svg>
</body></html>
